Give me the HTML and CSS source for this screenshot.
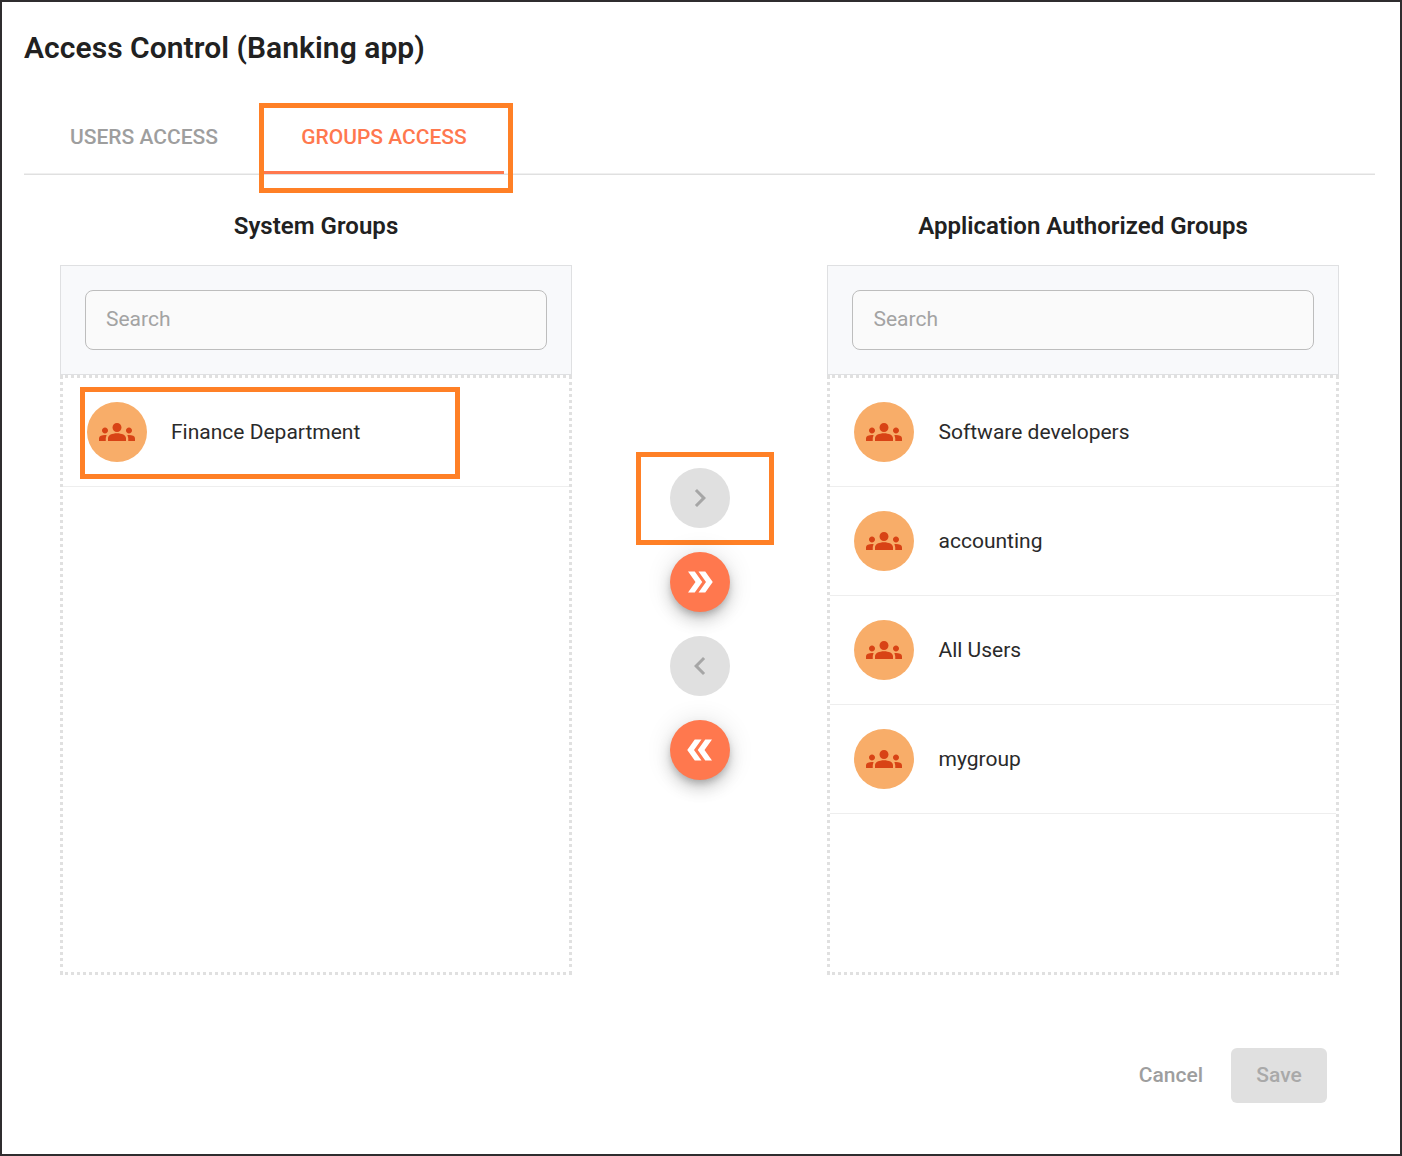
FILE: index.html
```html
<!DOCTYPE html>
<html lang="en">
<head>
<meta charset="utf-8">
<title>Access Control</title>
<link rel="stylesheet" href="styles.css">
</head>
<body>
<svg width="0" height="0" class="sprite" aria-hidden="true">
  <symbol id="groups" viewBox="0 0 24 24"><path d="M12 12.75c1.63 0 3.07.39 4.24.9 1.08.48 1.76 1.56 1.76 2.73V18H6v-1.61c0-1.18.68-2.26 1.76-2.73 1.17-.52 2.61-.91 4.24-.91zM4 13c1.1 0 2-.9 2-2s-.9-2-2-2-2 .9-2 2 .9 2 2 2zm1.13 1.1c-.37-.06-.74-.1-1.13-.1-.99 0-1.93.21-2.78.58C.48 14.9 0 15.62 0 16.43V18h4.5v-1.61c0-.83.23-1.61.63-2.29zM20 13c1.1 0 2-.9 2-2s-.9-2-2-2-2 .9-2 2 .9 2 2 2zm4 3.43c0-.81-.48-1.53-1.22-1.85-.85-.37-1.79-.58-2.78-.58-.39 0-.76.04-1.13.1.4.68.63 1.46.63 2.29V18H24v-1.57zM12 6c1.66 0 3 1.34 3 3s-1.34 3-3 3-3-1.34-3-3 1.34-3 3-3z"/></symbol>
  <symbol id="right" viewBox="0 0 24 24"><path d="M10 6 8.59 7.41 13.17 12l-4.58 4.59L10 18l6-6z"/></symbol>
  <symbol id="left" viewBox="0 0 24 24"><path d="M15.41 7.41 14 6l-6 6 6 6 1.41-1.41L10.83 12z"/></symbol>
  <symbol id="all" viewBox="0 0 24 24"><path d="M15.5 5H11l5 7-5 7h4.5l5-7z"/><path d="M8.5 5H4l5 7-5 7h4.5l5-7z"/></symbol>
</svg>
<main class="dialog">
  <h1 class="title">Access Control (Banking app)</h1>
  <nav class="tabs">
    <div class="tab">USERS ACCESS</div>
    <div class="tab active">GROUPS ACCESS<span class="mark mark-tab"></span></div>
  </nav>
  <div class="transfer">
    <section class="panel">
      <h2 class="heading">System Groups</h2>
      <div class="search"><input class="field" type="text" placeholder="Search"></div>
      <div class="list">
        <div class="row"><span class="avatar"><svg class="icon"><use href="#groups"/></svg></span><span class="name">Finance Department</span><span class="mark mark-row"></span></div>
      </div>
    </section>
    <div class="actions">
      <button class="fab disabled"><svg class="icon"><use href="#right"/></svg><span class="mark mark-fab"></span></button>
      <button class="fab"><svg class="icon"><use href="#all"/></svg></button>
      <button class="fab disabled"><svg class="icon"><use href="#left"/></svg></button>
      <button class="fab"><svg class="icon flip"><use href="#all"/></svg></button>
    </div>
    <section class="panel authorized">
      <h2 class="heading">Application Authorized Groups</h2>
      <div class="search"><input class="field" type="text" placeholder="Search"></div>
      <div class="list">
        <div class="row"><span class="avatar"><svg class="icon"><use href="#groups"/></svg></span><span class="name">Software developers</span></div>
        <div class="row"><span class="avatar"><svg class="icon"><use href="#groups"/></svg></span><span class="name">accounting</span></div>
        <div class="row"><span class="avatar"><svg class="icon"><use href="#groups"/></svg></span><span class="name">All Users</span></div>
        <div class="row"><span class="avatar"><svg class="icon"><use href="#groups"/></svg></span><span class="name">mygroup</span></div>
      </div>
    </section>
  </div>
  <footer class="footer">
    <button class="cancel">Cancel</button>
    <button class="save">Save</button>
  </footer>
</main>
</body>
</html>
```
FILE: styles.css
```css
* { box-sizing: border-box; }
body { margin: 0; background: #fff; color: #212121; font-family: Roboto, "Liberation Sans", sans-serif; }
button { border: 0; padding: 0; font: inherit; }
.sprite { display: block; height: 0; }
.dialog { height: 1156px; border: 2px solid #2f2d2f; padding: 22px 25px 0 22px; background: #fff; }
.title { margin: 0; height: 48px; line-height: 48px; font-size: 30px; font-weight: 600; letter-spacing: 0.05px; white-space: nowrap; }
.tabs { display: flex; height: 75px; margin-top: 28px; box-shadow: inset 0 -1px #e0e0e0, inset 0 -2px #f0f0f0; }
.tab { position: relative; width: 240px; height: 74px; line-height: 74px; text-align: center; font-size: 21px; font-weight: 500; color: #9e9e9e; }
.active { color: #ff784e; box-shadow: inset 0 -3px #ff784e; }
.transfer { display: flex; justify-content: space-between; padding: 33px 36px 0; }
.panel { width: 512px; }
.heading { margin: 0; height: 57px; line-height: 36px; text-align: center; font-size: 24px; font-weight: 600; letter-spacing: 0.03px; }
.search { height: 110px; padding: 24px; border: 1px solid #dfe0e2; background: #f8f9fb; }
.field { display: block; width: 100%; height: 60px; border: 1px solid #bdbdbd; border-radius: 8px; padding: 0 20px 3px; background: #fafafa; font: 21px Roboto, "Liberation Sans", sans-serif; }
.field::placeholder { color: #a3a3a3; opacity: 1; }
.list { height: 600px; border: 3px dotted #e0e0e0; }
.row { position: relative; display: flex; align-items: center; gap: 24px; height: 109px; padding: 0 24px; border-bottom: 1px solid #eee; font-size: 21px; color: #2a2a2a; }
.authorized .row { gap: 24.5px; }
.authorized .field { padding-left: 20.5px; }
.avatar { display: grid; place-items: center; width: 60px; height: 60px; border-radius: 50%; background: #f8ad69; color: #d84315; }
.icon { display: block; width: 36px; height: 36px; fill: currentColor; }
.flip { transform: rotate(180deg); }
.actions { display: flex; flex-direction: column; gap: 24px; padding-top: 260px; }
.fab { position: relative; display: grid; place-items: center; width: 60px; height: 60px; border-radius: 50%; background: #ff784e; color: #fff; box-shadow: 0 4.5px 7.5px -1.5px rgba(0,0,0,.2), 0 9px 15px rgba(0,0,0,.14), 0 1.5px 27px rgba(0,0,0,.12); }
.disabled { background: #e0e0e0; color: #a6a6a6; box-shadow: none; }
.footer { display: flex; justify-content: flex-end; gap: 28px; padding: 73px 48px 0 0; font-size: 21px; font-weight: 500; }
.cancel { background: none; color: #9e9e9e; padding-bottom: 2px; }
.save { width: 96px; height: 55px; padding-bottom: 2px; border-radius: 6px; background: #e0e0e0; color: #a9a9a9; }
/* Callout frames drawn over the interface */
.mark { position: absolute; border: 5px solid #ff8026; pointer-events: none; }
.mark-tab { left: -5px; top: 3px; width: 254px; height: 90px; }
.mark-row { left: 17px; top: 9px; width: 380px; height: 92px; }
.mark-fab { left: -34px; top: -16px; width: 138px; height: 93px; }
```
